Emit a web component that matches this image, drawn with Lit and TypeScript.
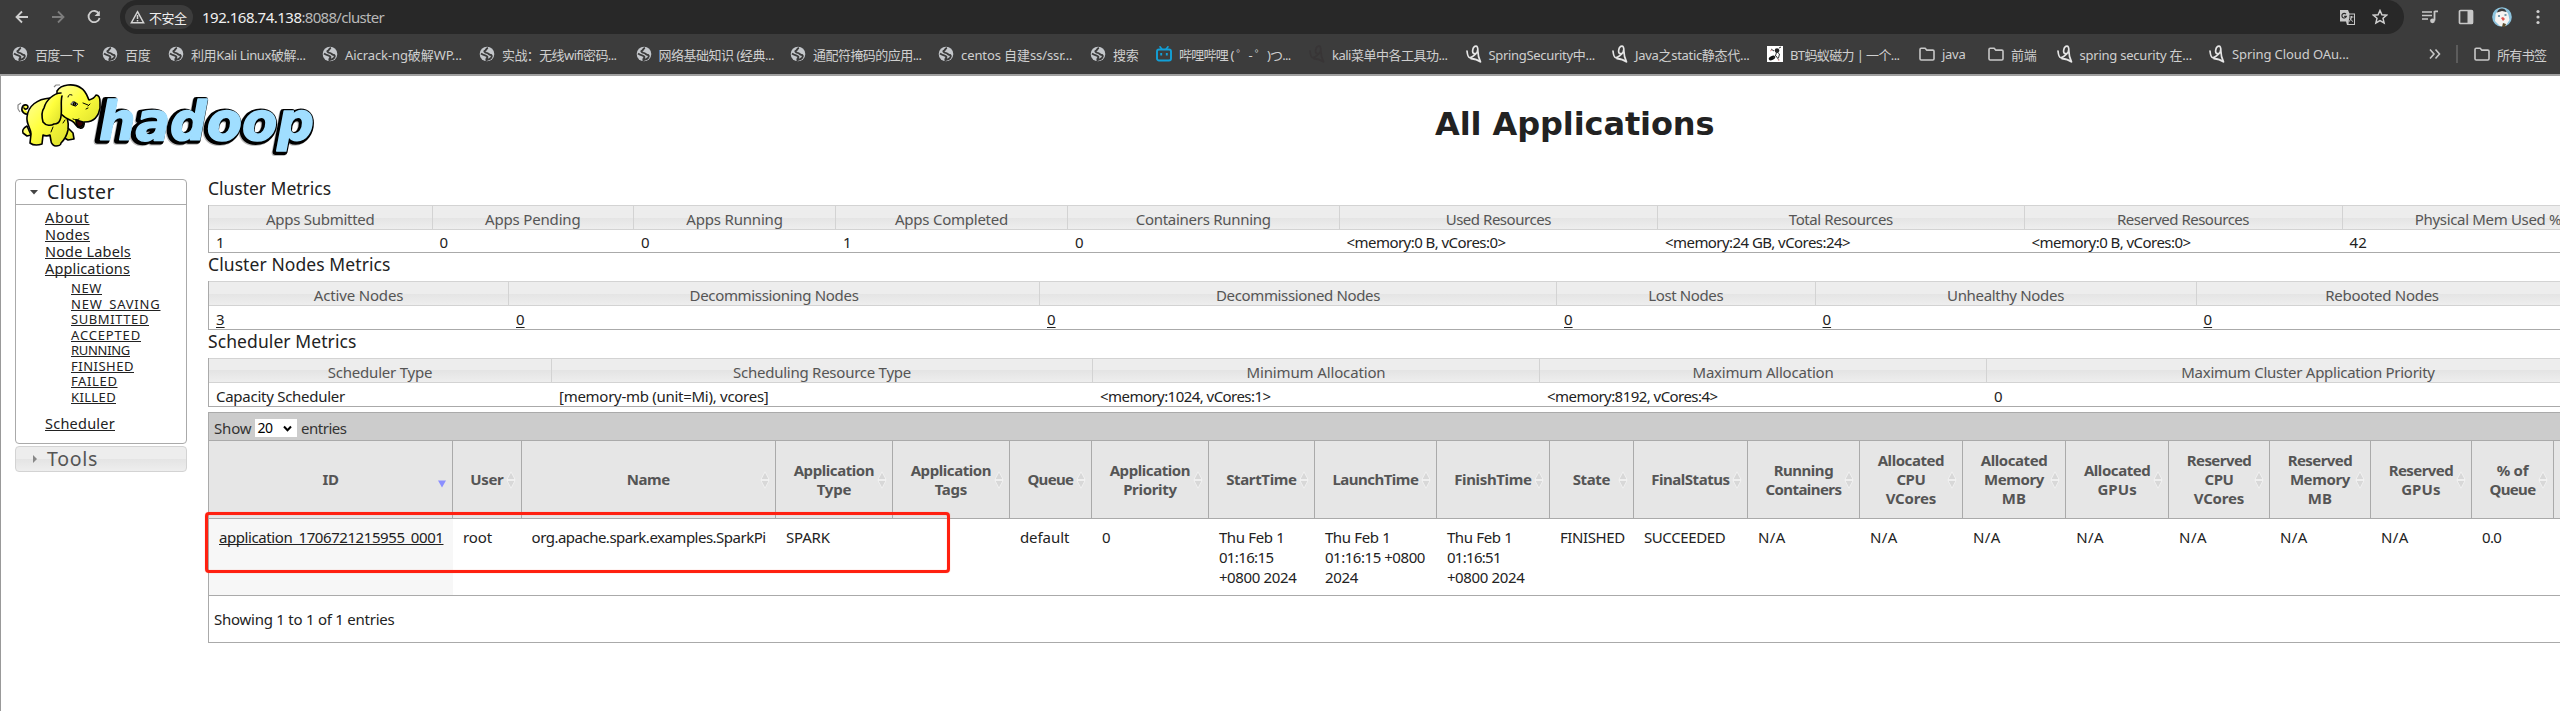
import { LitElement, html, css, svg } from "lit";
import { customElement, property } from "lit/decorators.js";

/** Text whose tracking is adjusted so that the run takes a given width. */
@customElement("fit-text")
class FitText extends LitElement {
  @property({ type: Number }) w = 0;
  @property() text = "";
  static styles = css`
    :host { display: inline-block; white-space: pre; }
  `;
  render() {
    return html`<span>${this.text}</span>`;
  }
  updated() {
    const span = this.renderRoot.querySelector("span") as HTMLElement;
    span.style.letterSpacing = "0px";
    const natural = span.getBoundingClientRect().width;
    if (this.w) span.style.letterSpacing = `${(this.w + 1.5 - natural) / this.text.length}px`;
  }
}

const t = (text: string, w = 0) => html`<fit-text .text=${text} .w=${w}></fit-text>`;

type Run = [string, number];

const globe = svg`<svg width="16" height="16" viewBox="0 0 16 16"><circle cx="8" cy="8" r="7.3" fill="#c4c7cb"/>
  <path d="M9 1.8C6.8 2.4 7.4 4.2 6 4.6 4.6 5 5.6 6.6 7.6 6.9 9.6 7.1 9.8 8.6 11.2 8.8 13 9 13.2 10 12.2 11.6 10.8 13.6 9.2 13.4 7.4 14.2 6.8 12.6 8.6 12 8.4 10.8 8 9.2 4.8 9.6 2 7.4" fill="none" stroke="#3c3c3c" stroke-width="1.9"/></svg>`;
const folder = svg`<svg width="16" height="16" viewBox="0 0 16 16"><path d="M1 3.6c0-.8.5-1.3 1.2-1.3h3.9l1.7 1.8h6c.7 0 1.2.5 1.2 1.2v7.5c0 .7-.5 1.2-1.2 1.2H2.2c-.7 0-1.2-.5-1.2-1.2z" fill="none" stroke="#c7c7c7" stroke-width="1.6"/></svg>`;
const csdn = (c: string) => svg`<svg width="16" height="18" viewBox="0 0 16 18"><path d="M1 6c.4 3.600 1 6.400 2.600 6.600C5.600 12.900 7.600 11 10 8.600M11.600 5c0 2.400-1.200 3.800-3 3.700-1.800-.1-2.200-1.800-1.900-3.600C7.100 3 8.300 1.200 10 1.200c1.500 0 1.900 2 1.900 5 0 4 .8 7 2.600 10.600M5 13.600c3 .2 6.600 1 9 3" fill="none" stroke="${c}" stroke-width="1.700" stroke-linecap="round"/></svg>`;
const bili = svg`<svg width="16" height="16" viewBox="0 0 16 16"><path d="M4 .8 5.800 3M12 .8 10.200 3" stroke="#12a0d7" stroke-width="1.600" stroke-linecap="round"/><rect x="1" y="3.500" width="14" height="11" rx="2" fill="none" stroke="#12a0d7" stroke-width="1.900"/><path d="M5.200 7v2.400M10.800 7v2.400" stroke="#12a0d7" stroke-width="1.900"/></svg>`;
const ant = svg`<svg width="16" height="16" viewBox="0 0 16 16"><path d="M0 0h16v16H0z" fill="#fff"/><circle cx="10" cy="4.600" r="2.300" fill="#222"/><ellipse cx="5" cy="12" rx="3.400" ry="2" transform="rotate(-25 5 12)" fill="#111"/><path d="M10 5 8.400 10 6 12M10 6l2.500 2-1 4M4 3l3 2M12 2l2-1M9 10l3 4" stroke="#333" fill="none" stroke-width="1"/><path d="M3 5l2-1M11 13l1 2" stroke="#d99" fill="none"/></svg>`;

const icons: Record<string, unknown> = {
  globe, folder, bili, ant, csdn: csdn("#e6e6e6"), dark: csdn("#383536"),
};

/* icon kind, label, label width, full item width */
const bookmarks: [string, string, number, number][] = [
  ["globe", "百度一下", 48, 90],
  ["globe", "百度", 24, 66],
  ["globe", "利用Kali Linux破解...", 113, 154],
  ["globe", "Aicrack-ng破解WP...", 115.500, 157],
  ["globe", "实战：无线wifi密码...", 113, 156.500],
  ["globe", "网络基础知识 (经典...", 114, 154.500],
  ["globe", "通配符掩码的应用...", 107, 148],
  ["globe", "centos 自建ss/ssr...", 110, 152],
  ["globe", "搜索", 24, 66],
  ["bili", "哔哩哔哩 ( ゜- ゜)つ...", 110, 153],
  ["dark", "kali菜单中各工具功...", 114, 156.500],
  ["csdn", "SpringSecurity中...", 105, 146.500],
  ["csdn", "Java之static静态代...", 113, 155],
  ["ant", "BT蚂蚁磁力 | 一个...", 108, 152],
  ["folder", "java", 22, 69],
  ["folder", "前端", 24, 68.500],
  ["csdn", "spring security 在...", 111, 152.500],
  ["csdn", "Spring Cloud OAu...", 115.500, 217],
];

@customElement("browser-chrome")
class BrowserChrome extends LitElement {
  static styles = css`
    :host { display: block; background: #3c3c3c; border-bottom: 2px solid #a0a0a0; box-sizing: border-box; height: 76px; font-family: "Noto Sans", "Noto Sans CJK SC", sans-serif; color: #d0d0d0; }
    svg { display: block; flex: none; }
    .bar { display: flex; height: 34px; align-items: center; }
    .nav { display: flex; width: 120px; box-sizing: border-box; padding-left: 14px; gap: 20px; }
    .omni { display: flex; align-items: center; width: 2284px; height: 34px; background: #282828; border-radius: 17px; box-sizing: border-box; padding: 0 16px 0 5px; }
    .chip { display: flex; align-items: center; gap: 4px; height: 24px; width: 68px; border-radius: 12px; background: #3c3c3c; padding-left: 5px; box-sizing: border-box; font-size: 13px; color: #eee; }
    .url { margin-left: 9px; font-size: 15px; color: #f0f0f0; flex: 1; }
    .url .rest { color: #b9b9b9; }
    .end { display: flex; gap: 16px; }
    .tools { display: flex; flex: 1; gap: 18px; padding-left: 16px; align-items: center; }
    .marks { display: flex; align-items: center; height: 40px; padding-left: 12px; font-size: 13px; color: #cfcfcf; }
    .mark { display: flex; align-items: center; gap: 7px; flex: none; }
    .more { width: 16px; }
    .sep { width: 2px; height: 18px; background: #5c5c5c; margin: 0 16px 0 14px; }
  `;
  render() {
    return html`
      <div class="bar">
        <div class="nav">
          <svg width="16" height="16" viewBox="0 0 16 16"><path d="M14 8H3M8 2.500 2.500 8 8 13.500" fill="none" stroke="#cfcfcf" stroke-width="1.800"/></svg>
          <svg width="16" height="16" viewBox="0 0 16 16"><path d="M2 8h11M8 2.500 13.500 8 8 13.500" fill="none" stroke="#7d7d7d" stroke-width="1.800"/></svg>
          <svg width="16" height="16" viewBox="0 0 16 16"><path d="M13 4.700A5.600 5.600 0 1 0 13.600 9" fill="none" stroke="#cfcfcf" stroke-width="1.800"/><path d="M13.800 1.800v5.200H8.600z" fill="#cfcfcf"/></svg>
        </div>
        <div class="omni">
          <div class="chip">
            <svg width="15" height="14" viewBox="0 0 15 14"><path d="M7.500 1.700 13.600 12.700H1.400z" fill="none" stroke="#d5d5d5" stroke-width="1.500"/><path d="M7.500 5v4M7.500 10v1.500" stroke="#d5d5d5" stroke-width="1.500"/></svg>
            ${t("不安全", 36)}
          </div>
          <div class="url">${t("192.168.74.138", 98)}<span class="rest">${t(":8088/cluster", 81)}</span></div>
          <div class="end">
            <svg width="17" height="17" viewBox="0 0 17 17"><path d="M1 1h8l1.500 3.500H16V16H8l-1-3.500H1z" fill="#c7c7c7"/><path d="M10.500 5.500H15V15H9.500z" fill="#282828"/><path d="M7 5.200a2.300 2.300 0 1 0 .4 2.200H5.200" fill="none" stroke="#282828" stroke-width="1.100"/><path d="M10.500 8h4M12.500 7v1c-.3 2-1.200 3.500-2.500 4.500M11 9c.6 1.700 1.500 2.600 3 3.500" fill="none" stroke="#c7c7c7"/></svg>
            <svg width="16" height="16" viewBox="0 0 16 16"><path d="m8 1.500 1.900 4.300 4.700.4-3.600 3.100 1.100 4.600L8 11.500l-4.100 2.400L5 9.300 1.400 6.200l4.700-.4z" fill="none" stroke="#d0d0d0" stroke-width="1.500"/></svg>
          </div>
        </div>
        <div class="tools">
          <svg width="20" height="16" viewBox="0 0 20 16"><path d="M2 3h10M2 6.500h10M2 10h6" stroke="#c7c7c7" stroke-width="1.700"/><path d="M14.500 2.300H18M14.500 2v9.500" stroke="#c7c7c7" stroke-width="1.800"/><circle cx="12.500" cy="11.800" r="2.400" fill="#c7c7c7"/></svg>
          <svg width="16" height="16" viewBox="0 0 16 16"><rect x="1.500" y="1.500" width="13" height="13" rx="1" fill="none" stroke="#c7c7c7" stroke-width="1.700"/><path d="M9.500 1.500h5v13h-5z" fill="#c7c7c7"/></svg>
          <svg width="20" height="20" viewBox="0 0 20 20"><circle cx="10" cy="10" r="9.800" fill="#8cc3dd"/><path d="M3.500 8c0-5 12-6 13 0l1 5-4 6H8l-5-5z" fill="#f5f3f1"/><path d="M5 5.500C6 .5 13 0 14.500 5L10 4z" fill="#3c3c3c"/><path d="M9 11l2-1 2 2-2 2z" fill="#e0524c"/><path d="M6 9h2M12.500 8h2" stroke="#4d7f96" stroke-width="1.300"/><path d="M11 16l3 1-1 3h-3z" fill="#5b4d2e"/></svg>
          <svg width="16" height="16" viewBox="0 0 16 16"><g fill="#cfcfcf"><circle cx="8" cy="2.500" r="1.600"/><circle cx="8" cy="8" r="1.600"/><circle cx="8" cy="13.500" r="1.600"/></g></svg>
        </div>
      </div>
      <div class="marks">
        ${bookmarks.map(([k, label, w, full]) => html`<div class="mark" style="width:${full}px">${icons[k]}${t(label, w)}</div>`)}
        <svg class="more" width="16" height="12" viewBox="0 0 16 12"><path d="m4 1.500 4 4.500-4 4.500M9.500 1.500l4 4.500-4 4.500" fill="none" stroke="#c7c7c7" stroke-width="1.600"/></svg>
        <div class="sep"></div>
        <div class="mark">${folder}${t("所有书签", 48)}</div>
      </div>
    `;
  }
}

@customElement("hadoop-logo")
class HadoopLogo extends LitElement {
  static styles = css`
    :host { display: block; flex: none; }
    svg { display: block; overflow: visible; }
    .word { font: italic bold 53px "DejaVu Sans", sans-serif; stroke-linejoin: round; }
  `;
  render() {
    return html`<svg width="310" height="100" viewBox="15 78 310 100">
      <defs><linearGradient id="y" x1="0" y1="0" x2="1" y2="1"><stop offset="0" stop-color="#ffff9c"/><stop offset=".45" stop-color="#ffff3c"/><stop offset="1" stop-color="#d8dc2c"/></linearGradient></defs>
      <g class="word">
        <text x="95" y="141.500" textLength="217" lengthAdjust="spacingAndGlyphs" fill="#bbb" stroke="#bbb" stroke-width="6">hadoop</text>
        <text x="96" y="140.500" textLength="217" lengthAdjust="spacingAndGlyphs" fill="#000" stroke="#000" stroke-width="6">hadoop</text>
        <text x="99" y="140" textLength="215" lengthAdjust="spacingAndGlyphs" fill="#a0deff" stroke="#a0deff" stroke-width="1.600">hadoop</text>
      </g>
      <g stroke="#000" stroke-width="1.600" stroke-linejoin="round" stroke-linecap="round" fill="url(#y)">
        <path d="M29 114c-4 1-8-2-7-6 1-4 6-4 6-1 0 2-3 3-4 1"/>
        <path d="M27 126c-4 2-5 5-4 7l4 3 4-1zM68 128l5 5 1 6-6 1-7-4z"/>
        <path d="M50 98C37 99 28 106 27 117c-1 7 4 11 4 17l-1 9c4 3 9 2 12 1l1-9c2 1 5 1 7 0l1 6c0 3 3 5 5 5s5-1 5-3c3-3 6-8 7-13 1-6 0-9-1-13z"/>
        <path d="M57 91c4-7 17-8 24-3 5 3 6 8 8 12 4-1 6-3 7-5 3 0 4 3 4 7 1 8-2 16-9 19-2 1-5 1-7 1 1 3-1 7-4 6-4 0-4-5-8-7-8-3-14-9-15-17z"/>
        <path d="M61 93c-7 0-15 7-17 15-3 4-2 10-1 14 3 4 8 4 11 2 2 0 5-1 6-4 3-6 0-17 2-24"/>
        <path d="M73 119c2 1 4 1 6 0" fill="none" stroke-width="1"/>
        <path d="M76 120l7 2c1 3-1 5-4 5-2-1-3-4-3-7z" fill="#300"/>
        <path d="M68 97c0-2 2-3 4-2M83 103l5 2M86 109l2-1M88 106l2-2M53 127l-2 5M63 123l2-3" fill="none" stroke-width="1"/>
        <path d="M71 104c1-3 4-3 5-1l2 1-2 2z" fill="#fff" stroke-width=".8"/><circle cx="74.500" cy="104" r="1.300"/>
      </g>
      <path d="M54 87l2-2 4 0M18 109v-4l3-2M20 112l-2-3" fill="none" stroke="#888" stroke-width="1.200"/>
    </svg>`;
  }
}

const subLinks: Run[] = [["NEW", 29.500], ["NEW_SAVING", 88], ["SUBMITTED", 76.500], ["ACCEPTED", 68.500], ["RUNNING", 57.500], ["FINISHED", 61.500], ["FAILED", 45], ["KILLED", 43.500]];

@customElement("side-nav")
class SideNav extends LitElement {
  static styles = css`
    :host { display: flex; flex: none; flex-direction: column; gap: 2px; width: 172px; color: #222; font-family: "Noto Sans", sans-serif; }
    .panel { border: 1px solid #aaa; border-radius: 4px; height: 265px; box-sizing: border-box; }
    .head { display: flex; align-items: center; height: 24px; border-bottom: 1px solid #aaa; font-size: 19.500px; line-height: 24px; padding-left: 13px; gap: 8px; }
    .tools { border: 1px solid #d3d3d3; border-radius: 4px; height: 24px; color: #555; background: linear-gradient(#ededed 50%, #e4e4e4 50%, #eee); }
    .links { display: flex; flex-direction: column; padding: 4px 0 0 29px; font-size: 14.500px; line-height: 17px; align-items: flex-start; }
    .sub { display: flex; flex-direction: column; align-items: flex-start; font-size: 13px; line-height: 15.500px; padding: 4px 0 10px 26px; }
    .links fit-text { text-decoration: underline; text-decoration-thickness: 1px; text-decoration-skip-ink: none; text-underline-offset: 1px; }
  `;
  render() {
    return html`
      <div class="panel">
        <div class="head"><svg width="10" height="10" viewBox="0 0 10 10"><path d="M1 3h8L5 7.500z" fill="#444"/></svg>${t("Cluster", 66.500)}</div>
        <div class="links">
          ${t("About", 43)}${t("Nodes", 43.500)}${t("Node Labels", 84.500)}${t("Applications", 83.500)}
          <div class="sub">${subLinks.map(([s, w]) => t(s, w))}</div>
          ${t("Scheduler", 68.500)}
        </div>
      </div>
      <div class="head tools"><svg width="10" height="10" viewBox="0 0 10 10"><path d="M4 1v8l4-4z" fill="#888"/></svg>${t("Tools", 49.500)}</div>
    `;
  }
}

interface Metric { head: Run; cell: Run; width: number; link?: boolean }
const m = (h: string, hw: number, c: string, cw: number, width: number, link = false): Metric => ({ head: [h, hw], cell: [c, cw], width, link });

const clusterMetrics = [
  m("Apps Submitted", 107, "1", 0, 223.500),
  m("Apps Pending", 94, "0", 0, 201.500),
  m("Apps Running", 95, "0", 0, 202),
  m("Apps Completed", 111.500, "1", 0, 232),
  m("Containers Running", 133.500, "0", 0, 271.500),
  m("Used Resources", 103.700, "<memory:0 B, vCores:0>", 157.500, 318.500),
  m("Total Resources", 102.500, "<memory:24 GB, vCores:24>", 183.500, 366.500),
  m("Reserved Resources", 130.500, "<memory:0 B, vCores:0>", 157.500, 318),
  m("Physical Mem Used %", 145, "42", 16, 292),
];
const nodeMetrics = [
  m("Active Nodes", 88, "3", 0, 300, true),
  m("Decommissioning Nodes", 167.500, "0", 0, 531, true),
  m("Decommissioned Nodes", 162.500, "0", 0, 517, true),
  m("Lost Nodes", 73.500, "0", 0, 258.500, true),
  m("Unhealthy Nodes", 115.500, "0", 0, 381, true),
  m("Rebooted Nodes", 112, "0", 0, 372, true),
];
const schedulerMetrics = [
  m("Scheduler Type", 103, "Capacity Scheduler", 127.500, 343),
  m("Scheduling Resource Type", 176.500, "[memory-mb (unit=Mi), vcores]", 208, 541),
  m("Minimum Allocation", 137.500, "<memory:1024, vCores:1>", 169, 447),
  m("Maximum Allocation", 139.500, "<memory:8192, vCores:4>", 169, 447),
  m("Maximum Cluster Application Priority", 252, "0", 0, 643),
];

@customElement("metrics-table")
class MetricsTable extends LitElement {
  @property({ attribute: false }) title = "";
  @property({ type: Number }) titleWidth = 0;
  @property({ attribute: false }) cols: Metric[] = [];
  static styles = css`
    :host { display: block; font: 15px "Noto Sans", sans-serif; color: #222; }
    .title { font-size: 17.500px; height: var(--title-h, 29px); line-height: var(--title-lh, 24px); }
    .table { display: flex; width: max-content; border-left: 1px solid #aaa; }
    .col { flex: none; box-sizing: border-box; }
    .th { height: 23px; line-height: 26px; text-align: center; color: #555; border: 1px solid #d3d3d3; border-left: 0; background: linear-gradient(#ededed 50%, #e4e4e4 50%, #eee); }
    .td { height: var(--cell-h, 22px); line-height: var(--cell-lh, 24px); padding-left: 7px; border-bottom: 1px solid #aaa; }
    .link { text-decoration: underline; text-underline-offset: 2px; }
  `;
  render() {
    return html`
      <div class="title">${t(this.title, this.titleWidth)}</div>
      <div class="table">
        ${this.cols.map((c) => html`<div class="col" style="width:${c.width}px">
          <div class="th">${t(c.head[0], c.head[1])}</div>
          <div class="td"><span class=${c.link ? "link" : ""}>${c.cell[1] ? t(c.cell[0], c.cell[1]) : c.cell[0]}</span></div>
        </div>`)}
      </div>`;
  }
}

interface AppCol { width: number; head: Run[]; cell: Run[]; sorted?: boolean }
const c = (width: number, head: Run[], cell: Run[], sorted = false): AppCol => ({ width, head, cell, sorted });
const NA: Run[] = [["N/A", 26.500]];
const APP: Run = ["Application", 79];
const ALLOC: Run = ["Allocated", 65];
const RES: Run = ["Reserved", 63];
const appCols: AppCol[] = [
  c(244, [["ID", 14.500]], [["application_1706721215955_0001", 223]], true),
  c(68.600, [["User", 31.500]], [["root", 27.500]]),
  c(254.300, [["Name", 41.500]], [["org.apache.spark.examples.SparkPi", 232.500]]),
  c(117, [APP, ["Type", 33]], [["SPARK", 42.500]]),
  c(117, [APP, ["Tags", 31]], []),
  c(82, [["Queue", 44.500]], [["default", 48]]),
  c(117, [APP, ["Priority", 52]], [["0", 0]]),
  c(106, [["StartTime", 69]], [["Thu Feb 1", 64], ["01:16:15", 53], ["+0800 2024", 76]]),
  c(122, [["LaunchTime", 84.500]], [["Thu Feb 1", 64], ["01:16:15 +0800", 98.500], ["2024", 31.500]]),
  c(113, [["FinishTime", 76]], [["Thu Feb 1", 64], ["01:16:51", 52.500], ["+0800 2024", 76]]),
  c(84, [["State", 36]], [["FINISHED", 63.500]]),
  c(114, [["FinalStatus", 77]], [["SUCCEEDED", 80]]),
  c(112, [["Running", 58], ["Containers", 74.500]], NA),
  c(103, [ALLOC, ["CPU", 27.500], ["VCores", 49]], NA),
  c(103.300, [ALLOC, ["Memory", 58.500], ["MB", 23]], NA),
  c(102.900, [ALLOC, ["GPUs", 38]], NA),
  c(100.800, [RES, ["CPU", 27.500], ["VCores", 49]], NA),
  c(101, [RES, ["Memory", 58.500], ["MB", 23]], NA),
  c(101, [RES, ["GPUs", 38]], NA),
  c(82.200, [["% of", 30], ["Queue", 44.500]], [["0.0", 18]]),
  c(90, [], []),
];

@customElement("apps-table")
class AppsTable extends LitElement {
  static styles = css`
    :host { display: block; width: max-content; position: relative; margin-top: 5px; font: 15px "Noto Sans", sans-serif; color: #222; border: 1px solid #aaa; height: 231px; box-sizing: border-box; }
    .top { display: flex; align-items: center; height: 27px; background: #ccc; padding: 3px 0 0 5px; box-sizing: border-box; color: #333; }
    .select { display: flex; align-items: center; justify-content: space-between; background: #fff; color: #000; width: 42.500px; height: 18px; margin: 0 4px 0 3px; padding: 0 5px 0 3px; box-sizing: border-box; font-size: 14px; line-height: 18px; }
    .cols { display: flex; border-top: 1px solid #aaa; }
    .col { flex: none; box-sizing: border-box; }
    .th { position: relative; display: flex; flex-direction: column; align-items: center; justify-content: center; box-sizing: border-box; height: 78px; background: #e6e6e6; border-right: 1px solid #aaa; border-bottom: 1px solid #aaa; color: #555; font-weight: bold; line-height: 19px; }
    .sort { position: absolute; right: 4px; top: 30px; }
    .td { display: flex; flex-direction: column; align-items: flex-start; height: 77px; box-sizing: border-box; border-bottom: 1px solid #aaa; padding: 8px 0 0 10px; line-height: 20px; }
    .sorted { background: #f7f7f7; }
    .sorted fit-text { text-decoration: underline; text-decoration-thickness: 1px; text-decoration-skip-ink: none; text-underline-offset: 1px; }
    .info { padding: 13px 0 0 5px; line-height: 20px; }
    .mark { position: absolute; left: -4px; top: 99px; width: 745px; height: 61px; box-sizing: border-box; border: 3px solid #ff2010; border-radius: 4px; box-shadow: 0 0 1px #ff8070, inset 0 0 1px #ff8070; }
  `;
  render() {
    return html`
      <div class="top">${t("Show", 36)}<div class="select">${t("20", 13.500)}<svg width="9" height="7" viewBox="0 0 9 7"><path d="m1 1.500 3.500 3.700L8 1.500" fill="none" stroke="#000" stroke-width="2"/></svg></div>${t("entries", 44)}</div>
      <div class="cols">
        ${appCols.map((col) => html`<div class="col" style="width:${col.width}px">
          <div class="th">${col.head.map(([s, w]) => t(s, w))}
            <svg class="sort" width="12" height="18" viewBox="0 0 12 18">${col.sorted
              ? svg`<path d="M2 9.500h8L6 16.500z" fill="#8b8fff"/>`
              : svg`<path d="M6 .8 10 8.500H2zM6 17.200 10 9.500H2z" fill="#d8d8d8" stroke="#f6f6f6" stroke-width=".7"/>`}</svg>
          </div>
          <div class="td ${col.sorted ? "sorted" : ""}">${col.cell.map(([s, w]) => t(s, w))}</div>
        </div>`)}
      </div>
      <div class="info">${t("Showing 1 to 1 of 1 entries", 179)}</div>
      <div class="mark"></div>
    `;
  }
}

@customElement("app-root")
class AppRoot extends LitElement {
  static styles = css`
    :host { display: block; width: 100%; height: 711px; overflow: hidden; background: #fff; }
    .page { height: 635px; box-sizing: border-box; border-left: 1px solid #999; overflow: hidden; }
    .header { display: flex; height: 103px; padding-left: 14px; padding-top: 2px; box-sizing: border-box; }
    .title { margin-left: 1110px; padding-top: 23px; font: bold 32px/46px "DejaVu Sans", sans-serif; color: #222; }
    .body { display: flex; padding-left: 14px; gap: 21px; }
    .content { flex: none; margin-top: -3px; }
    .second { --cell-h: 23px; --cell-lh: 26px; --title-h: 28px; --title-lh: 22px; }
  `;
  render() {
    return html`
      <browser-chrome></browser-chrome>
      <div class="page">
        <div class="header"><hadoop-logo></hadoop-logo><div class="title">${t("All Applications", 278)}</div></div>
        <div class="body">
          <side-nav></side-nav>
          <div class="content">
            <metrics-table .title=${"Cluster Metrics"} .titleWidth=${121.500} .cols=${clusterMetrics}></metrics-table>
            <metrics-table class="second" .title=${"Cluster Nodes Metrics"} .titleWidth=${181} .cols=${nodeMetrics}></metrics-table>
            <metrics-table class="second" .title=${"Scheduler Metrics"} .titleWidth=${147} .cols=${schedulerMetrics}></metrics-table>
            <apps-table></apps-table>
          </div>
        </div>
      </div>
    `;
  }
}
